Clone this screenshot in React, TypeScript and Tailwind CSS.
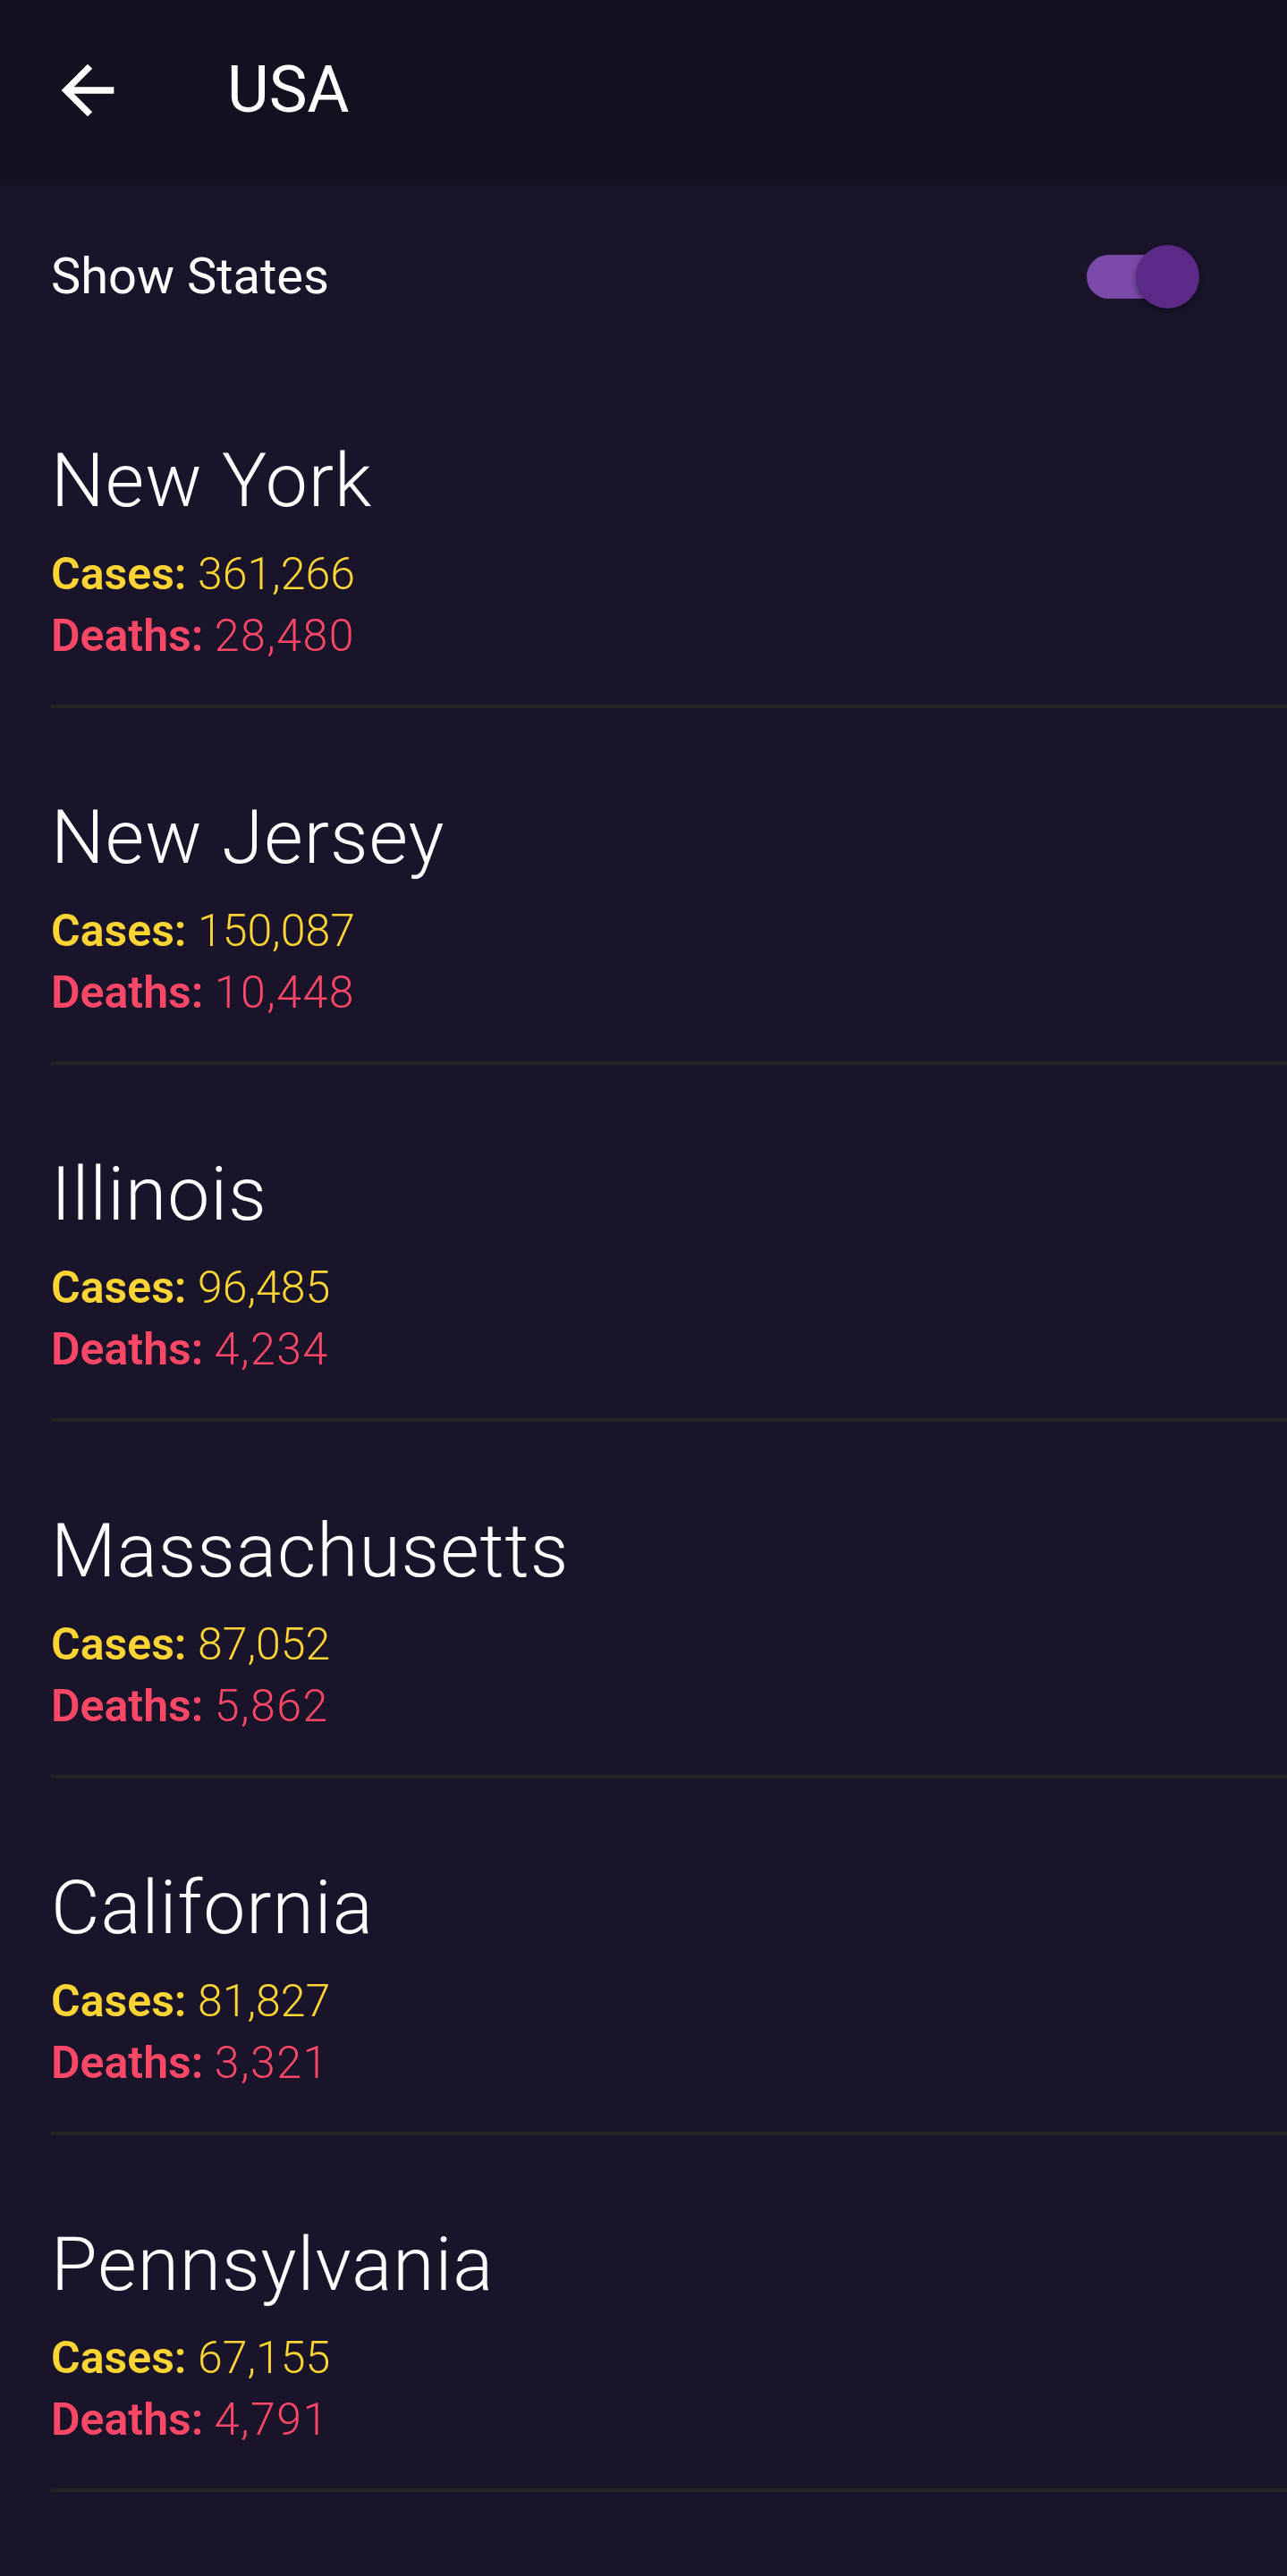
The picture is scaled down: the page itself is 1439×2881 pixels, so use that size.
const states = [
  { name: "New York", cases: "361,266", deaths: "28,480" },
  { name: "New Jersey", cases: "150,087", deaths: "10,448" },
  { name: "Illinois", cases: "96,485", deaths: "4,234" },
  { name: "Massachusetts", cases: "87,052", deaths: "5,862" },
  { name: "California", cases: "81,827", deaths: "3,321" },
  { name: "Pennsylvania", cases: "67,155", deaths: "4,791" },
];

function BackArrow() {
  return (
    <svg width="88" height="88" viewBox="0 0 24 24" fill="white">
      <path d="M20 11H7.83l5.59-5.59L12 4l-8 8 8 8 1.41-1.41L7.83 13H20v-2z" />
    </svg>
  );
}

export default function App() {
  return (
    <div className="min-h-[2881px] w-full bg-[#19142a] text-white">
      <header className="flex h-[202px] items-center bg-[#14101f] pl-[54px] shadow-[0_2px_6px_rgba(0,0,0,0.25)]">
        <BackArrow />
        <h1 className="ml-[112px] font-['Roboto',sans-serif] text-[72px] leading-none font-normal">USA</h1>
      </header>

      <div className="flex h-[191px] items-center pt-[23px] pl-[57px] pr-[109px]">
        <span className="flex-1 font-['Roboto',sans-serif] text-[56px] leading-none">Show States</span>
        <div className="relative h-[49px] w-[115px] rounded-full bg-[#7b4aa8]">
          <div className="absolute top-[-11px] right-[-11px] h-[71px] w-[71px] rounded-full bg-[#5b2a87] shadow-[0_3px_6px_rgba(0,0,0,0.45)]" />
        </div>
      </div>

      <ul>
        {states.map((s) => (
          <li key={s.name} className="ml-[57px] border-b-4 border-[#242424] pt-[95px] pb-[42px] font-['Roboto',sans-serif]">
            <div className="text-[84px] leading-[100px] font-light tracking-[0.012em]">{s.name}</div>
            <div className="mt-[20px] text-[50px] leading-[69px] text-[#fcd534]">
              <span className="font-semibold">Cases:</span> <span className="font-light">{s.cases}</span>
            </div>
            <div className="text-[50px] leading-[69px] text-[#fd4767]">
              <span className="font-semibold">Deaths:</span>{" "}
              <span className="font-light tracking-[0.03em]">{s.deaths}</span>
            </div>
          </li>
        ))}
      </ul>
    </div>
  );
}
